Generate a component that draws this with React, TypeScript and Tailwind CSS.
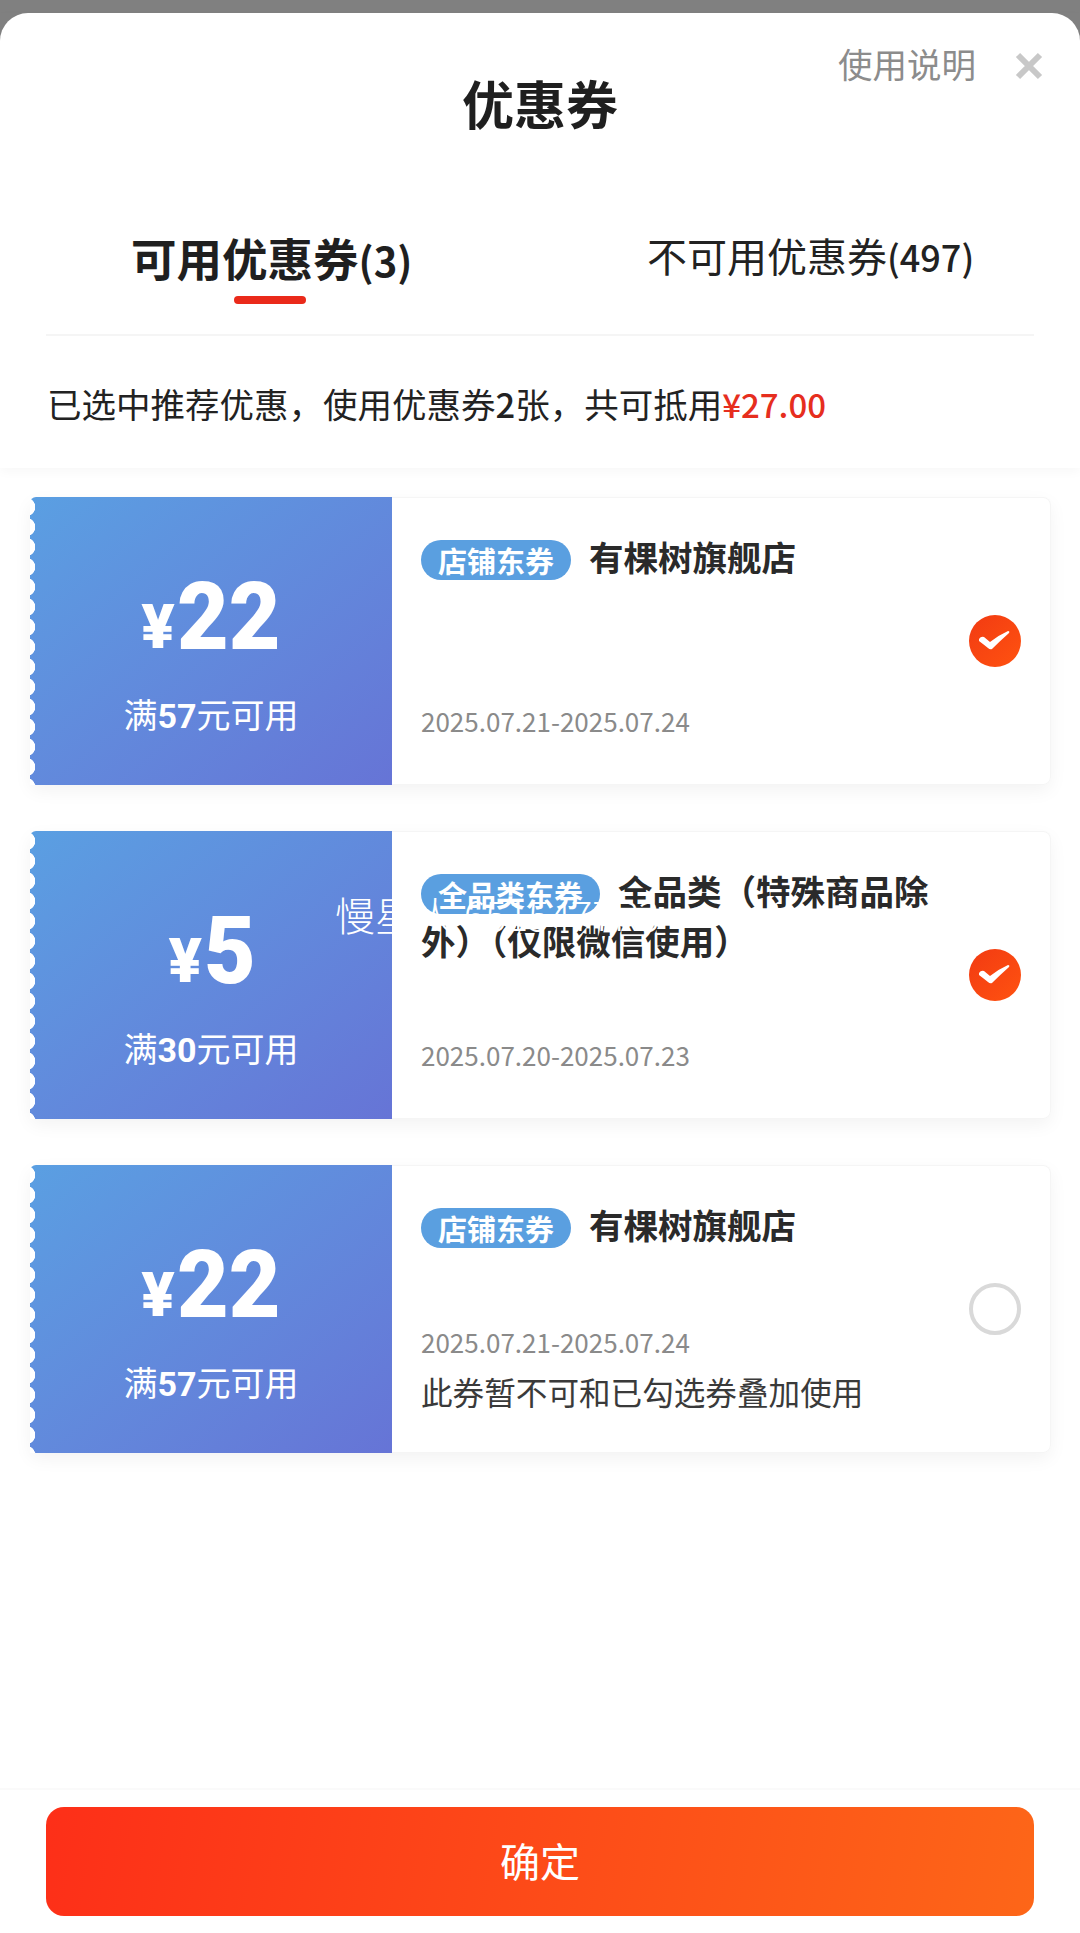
const sans = "font-['Noto_Sans_CJK_SC','Noto_Sans',sans-serif]";

type Coupon = {
  amount: string;
  limit: string;
  tag: string;
  title: string;
  date: string;
  note?: string;
  checked: boolean;
};

const COUPONS: Coupon[] = [
  { amount: '22', limit: '57', tag: '店铺东券', title: '有棵树旗舰店', date: '2025.07.21-2025.07.24', checked: true },
  { amount: '5', limit: '30', tag: '全品类东券', title: '全品类（特殊商品除外）（仅限微信使用）', date: '2025.07.20-2025.07.23', checked: true },
  { amount: '22', limit: '57', tag: '店铺东券', title: '有棵树旗舰店', date: '2025.07.21-2025.07.24', note: '此券暂不可和已勾选券叠加使用', checked: false },
];

function CheckMark({ checked }: { checked: boolean }) {
  if (!checked) {
    return <div className="w-[52px] h-[52px] rounded-full border-[4px] border-[#d9d9d9] bg-white" />;
  }
  return (
    <div className="w-[52px] h-[52px] rounded-full bg-gradient-to-br from-[#f23a12] to-[#ff5210]">
      <svg width="52" height="52" viewBox="0 0 52 52" fill="none">
        <path d="M10 24Q12 21 15 22L21 27Q30 20 39 16Q41 16 40 18Q31 26 23 34Q21 35 19 33Q14 29 10 26Z" fill="#fff" />
      </svg>
    </div>
  );
}

function CouponCard({ coupon }: { coupon: Coupon }) {
  return (
    <div className="h-[288px] flex rounded-[8px] bg-white shadow-[0_6px_18px_rgba(0,0,0,0.05)]">
      {/* Left stub with scalloped edge */}
      <div className="relative w-[362px] shrink-0 flex flex-col items-center rounded-l-[6px] bg-gradient-to-br from-[#5a9fe2] to-[#6674d6] text-white">
        <div className="absolute left-0 top-0 bottom-0 w-[6px] bg-[radial-gradient(circle_at_-4px_50%,#fff_9px,transparent_9.5px)] bg-[length:6px_20px]" />
        <div className="mt-[68px] h-[104px] flex items-end font-['Roboto',sans-serif]">
          <span className="text-[62px] leading-[80px] font-black mr-[2px] mb-[2px]">¥</span>
          <span className="inline-block text-[94px] leading-[104px] font-black scale-x-[0.95] origin-left -mr-[5px]">{coupon.amount}</span>
        </div>
        <div className="mt-[21px] text-[34px] leading-[48px]">
          满<span className="font-bold font-['Roboto',sans-serif]">{coupon.limit}</span>元可用
        </div>
      </div>
      {/* Right detail */}
      <div className="flex-1 min-w-0 flex items-center pl-[29px] pr-[29px] border border-l-0 border-[#f5f5f5] rounded-r-[8px]">
        <div className="flex-1 min-w-0 h-full flex flex-col pt-[33px] pr-[36px]">
          <div className="text-[34.5px] leading-[50px] font-bold text-[#2a2a2a]">
            <span className="inline-block align-[-2px] h-[40px] leading-[40px] px-[17px] mr-[18px] rounded-full bg-[#5a9fe0] text-white text-[29px]">{coupon.tag}</span>
            {coupon.title}
          </div>
          <div className={`mt-auto text-[26px] leading-[40px] text-[#8a8a8a] ${coupon.note ? '' : 'mb-[43px]'}`}>{coupon.date}</div>
          {coupon.note && <div className="mt-[9px] mb-[41px] text-[31.6px] leading-[40px] text-[#3a3a3a]">{coupon.note}</div>}
        </div>
        <CheckMark checked={coupon.checked} />
      </div>
    </div>
  );
}

export default function App() {
  return (
    <div className={`relative h-[1933px] w-[1080px] overflow-hidden bg-[#808080] pt-[13px] ${sans}`}>
      <div className="h-[1920px] flex flex-col bg-white rounded-t-[28px]">
        {/* Header */}
        <div className="relative h-[455px] shrink-0 shadow-[0_4px_10px_rgba(0,0,0,0.03)]">
          <div className="pt-[54px] text-center text-[52px] leading-[72px] font-bold text-[#1f1f1f]">优惠券</div>
          <div className="absolute top-[26px] right-[104px] text-[34.5px] leading-[48px] text-[#8c8c8c]">使用说明</div>
          <svg className="absolute top-[38px] right-[36px]" width="30" height="30" viewBox="0 0 30 30" fill="none">
            <path d="M4 4L26 26M26 4L4 26" stroke="#c8c8c8" strokeWidth="6" />
          </svg>
          <div className="mt-[85px] mx-[46px] h-[112px] flex border-b-2 border-[#f5f5f5]">
            <div className="flex-1 pl-[85px] relative">
              <div className="text-[45.5px] leading-[66px] font-bold text-[#1f1f1f] whitespace-nowrap">可用优惠券<span className="text-[40px]">(3)</span></div>
              <div className="absolute left-[188px] top-[72px] w-[72px] h-[8px] rounded-full bg-[#ea2a1a]" />
            </div>
            <div className="w-[387px]">
              <div className="text-[40px] leading-[62px] text-[#222] whitespace-nowrap">不可用优惠券<span className="text-[36px] font-medium">(497)</span></div>
            </div>
          </div>
          <div className="mt-[42px] pl-[47px] text-[34.5px] leading-[50px] text-[#222] whitespace-nowrap">
            已选中推荐优惠，使用优惠券<span className="font-medium">2</span>张，共可抵用<span className="text-[33px] font-medium text-[#e62e1e]">¥27.00</span>
          </div>
        </div>

        {/* Coupon list */}
        <div className="flex-1 flex flex-col gap-[46px] pt-[29px] pl-[30px] pr-[29px]">
          {COUPONS.map((coupon, i) => (
            <CouponCard key={i} coupon={coupon} />
          ))}
        </div>

        {/* Footer */}
        <div className="h-[145px] shrink-0 pt-[17px] px-[46px] border-t-2 border-[#fafafa]">
          <div className="h-[109px] pb-[4px] rounded-[18px] bg-[linear-gradient(100deg,#fd2f18,#fd6618)] flex items-center justify-center text-[40px] text-white">确定</div>
        </div>
      </div>

      {/* Watermark */}
      <div className="absolute left-[335px] top-[884px] text-[40px] leading-[60px] font-light text-white whitespace-nowrap">慢星人 6515477R3</div>
    </div>
  );
}
